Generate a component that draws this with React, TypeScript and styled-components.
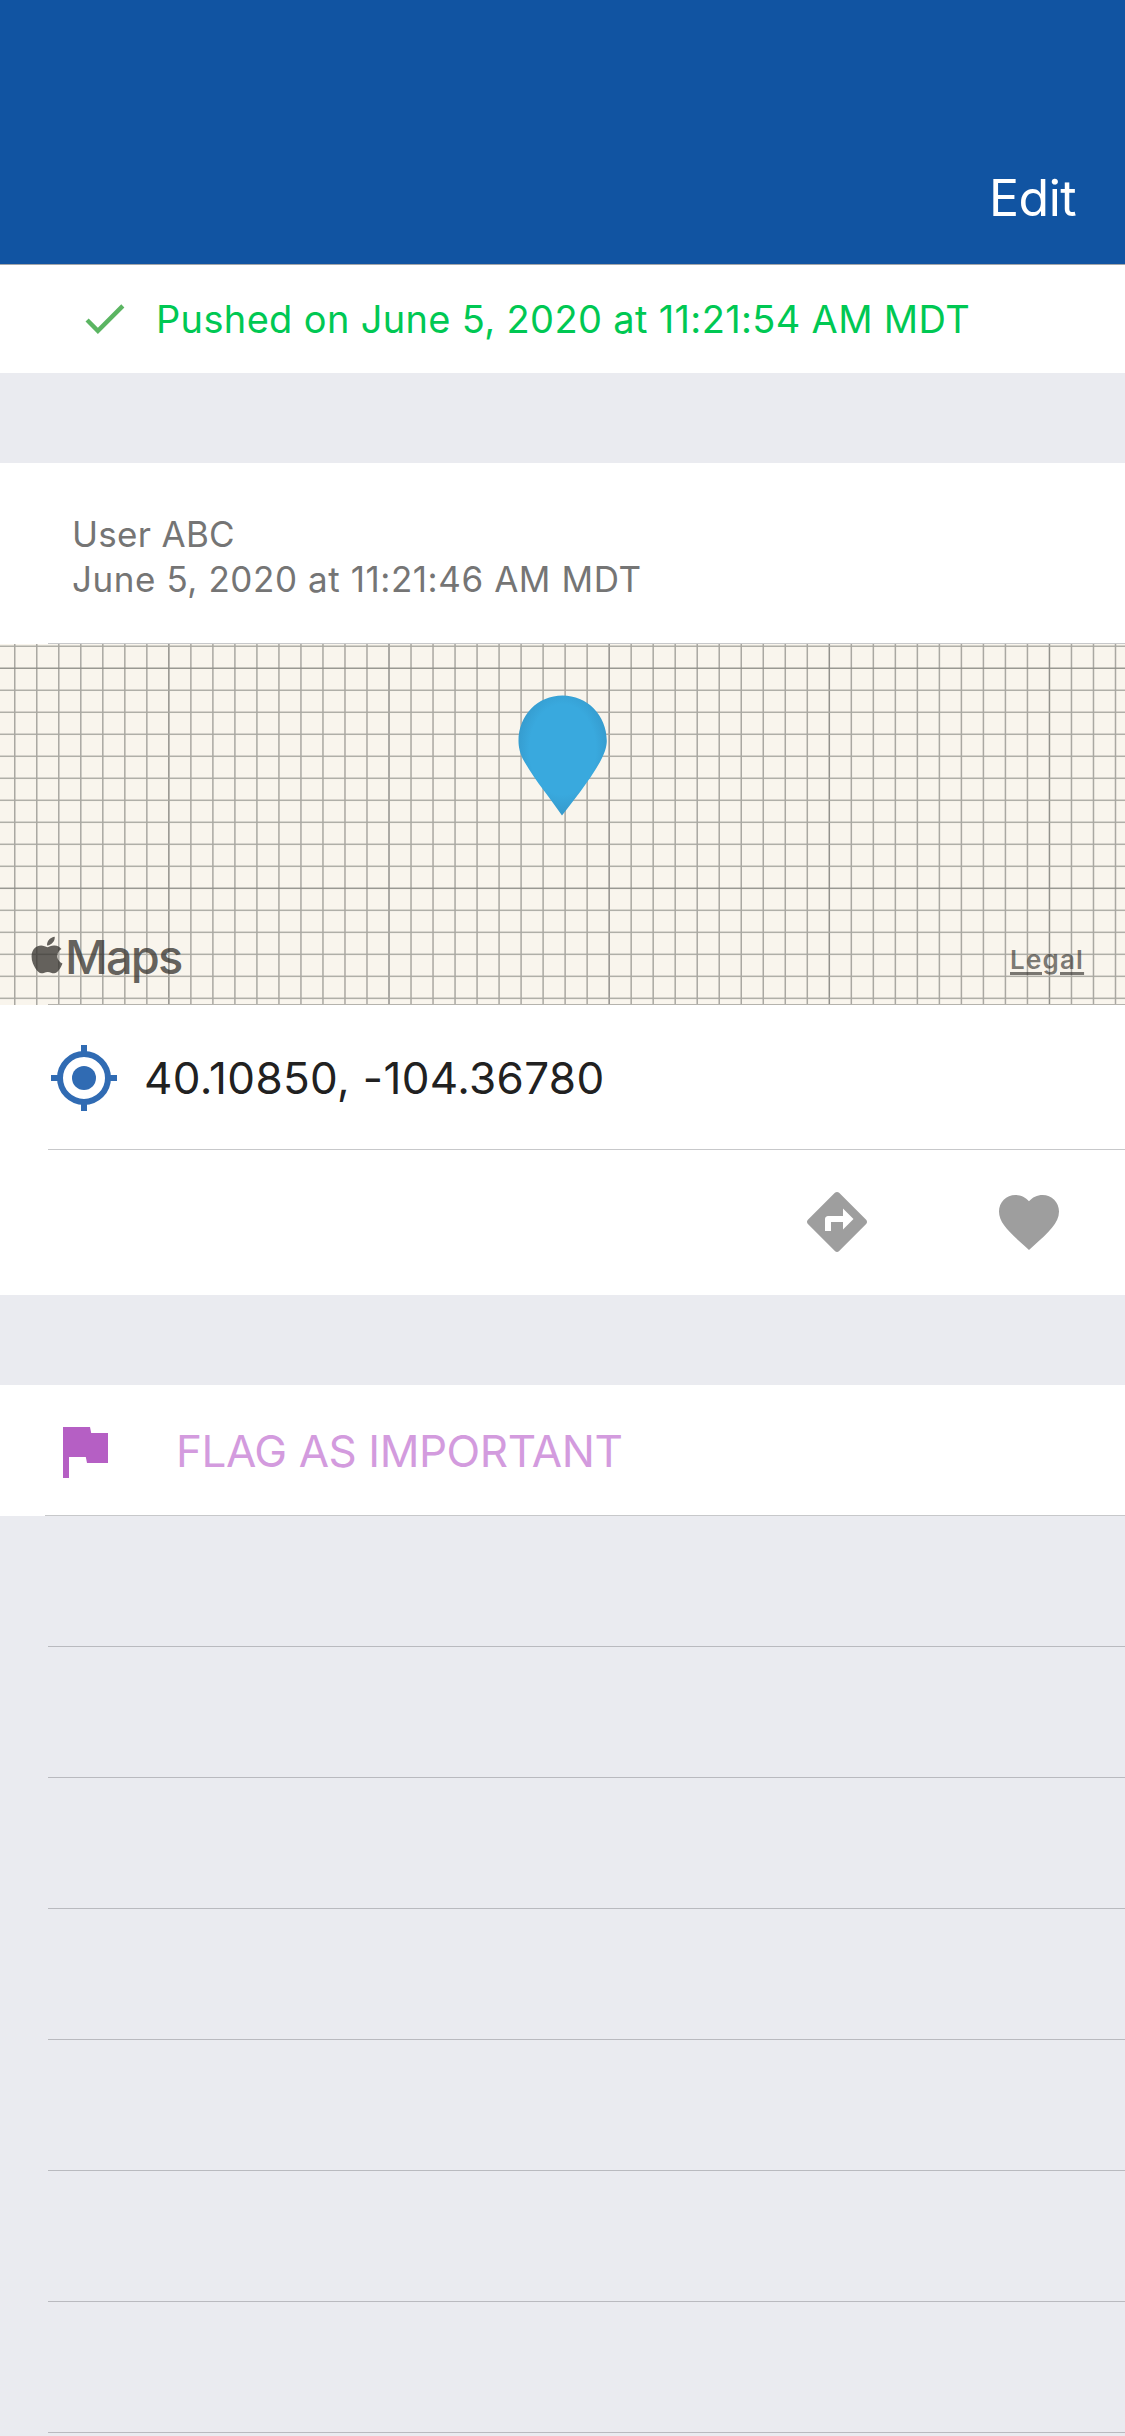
import React from "react";
import styled, { createGlobalStyle } from "styled-components";
import { FaApple } from "react-icons/fa";

const Global = createGlobalStyle`
  * { box-sizing: border-box; }
  body { margin: 0; background: #eaebf0; font-family: Inter, "Liberation Sans", sans-serif; }
`;

const Screen = styled.main`
  display: flex;
  flex-direction: column;
  height: 2436px;
  overflow: hidden;
  background: #eaebf0;
`;

const NavBar = styled.header`
  display: flex;
  justify-content: flex-end;
  align-items: flex-end;
  height: 265px;
  padding: 0 50px 36px 0;
  background: #1154a2;
  border-bottom: 1px solid #a3a6aa;
`;

const Label = styled.span<{ $size: number; $color: string; $width: number; $line?: number; $track?: number }>`
  display: block;
  font-size: ${(p) => p.$size}px;
  line-height: ${(p) => p.$line ?? 60}px;
  letter-spacing: ${(p) => p.$track ?? 0}px;
  color: ${(p) => p.$color};
  width: ${(p) => p.$width}px;
  white-space: nowrap;
`;

const Section = styled.section`
  background: #fff;
`;

const Gap = styled.div`
  height: 90px;
`;

const Row = styled.div<{ $height: number; $inset?: number; $left?: number }>`
  display: flex;
  align-items: center;
  height: ${(p) => p.$height}px;
  padding-top: 1px;
  padding-left: ${(p) => p.$left ?? 0}px;
  background: linear-gradient(#c7c8ca, #c7c8ca) ${(p) => p.$inset ?? 2000}px 100% / 100% 1px no-repeat;
`;

const Status = styled(Row)`
  padding-top: 0;
  padding-bottom: 1px;
`;

const Info = styled(Row)`
  flex-direction: column;
  align-items: flex-start;
  justify-content: center;
  padding-top: 7px;
`;

const MapView = styled.div`
  position: relative;
  height: 361px;
  overflow: hidden;
  background: #f9f5ed;
`;

const MapDrawing = styled.svg`
  display: block;
`;

const MapCredit = styled.div`
  position: absolute;
  left: 31px;
  top: 284px;
  display: flex;
  align-items: flex-start;
  gap: 2px;
  color: rgba(52, 50, 46, 0.76);
`;

const AppleMark = styled(FaApple)`
  display: block;
  flex: none;
  width: 32px;
  height: 42px;
  margin-top: 6px;
`;

const Legal = styled.a`
  position: absolute;
  left: 1009px;
  top: 298px;
  padding-left: 1px;
  font-size: 26px;
  font-weight: 600;
  line-height: 36px;
  letter-spacing: 1.2px;
  color: rgba(60, 58, 54, 0.68);
  text-decoration: underline;
  text-decoration-thickness: 3px;
  text-underline-offset: 3px;
`;

const MapsWord = styled.span`
  font-size: 47px;
  font-weight: 500;
  line-height: 58px;
  letter-spacing: -1.9px;
`;

const Actions = styled(Row)`
  justify-content: flex-end;
  gap: 120px;
  padding: 0 60px 1px 0;
`;

const Icon = styled.svg<{ $gap?: number }>`
  display: block;
  flex: none;
  margin-right: ${(p) => p.$gap ?? 0}px;
`;

const EmptyRow = styled.div`
  height: 131px;
  flex: none;
  margin-left: 48px;
  border-bottom: 1px solid #b9babf;
`;

const range = (count: number) => Array.from({ length: count }, (_, i) => i);

function Grid() {
  return (
    <g>
      {range(51).map((i) => (
        <rect key={i} x={14 + i * 22.015} width="1.5" height="361" fill={i % 10 === 7 ? "#92918c" : "#aaa8a2"} />
      ))}
      {range(17).map((i) => (
        <rect key={i} y={1.5 + i * 22.005} width="1125" height="1.5" fill={i % 10 === 1 ? "#908f8a" : "#a9a8a2"} opacity="0.92" />
      ))}
    </g>
  );
}

export default function App() {
  return (
    <>
      <Global />
      <Screen>
        <NavBar>
          <Label $size={50} $color="#fff" $width={86} $track={-0.5}>Edit</Label>
        </NavBar>
        <Section>
          <Status $height={108} $left={78}>
            <Icon $gap={25} width="53" height="53" viewBox="0 0 24 24" fill="#5bb562">
              <path d="M9 16.170 4.830 12l-1.420 1.410L9 19 21 7l-1.410-1.410z" />
            </Icon>
            <Label $size={38} $line={58} $color="#00c853" $width={820} $track={0.34}>Pushed on June 5, 2020 at 11:21:54 AM MDT</Label>
          </Status>
        </Section>
        <Gap />
        <Section>
          <Info $height={181} $left={72} $inset={48}>
            <Label $size={35} $line={45} $color="#757575" $width={170} $track={0.3}>User ABC</Label>
            <Label $size={35} $line={45} $color="#757575" $width={580} $track={0.57}>June 5, 2020 at 11:21:46 AM MDT</Label>
          </Info>
          <MapView>
            <MapDrawing width="1125" height="362" viewBox="0 0 1125 362">
              <defs>
                <radialGradient id="pin" cx="50%" cy="45%" r="58%">
                  <stop offset="0.65" stopColor="#39a9de" />
                  <stop offset="1" stopColor="#3496c8" />
                </radialGradient>
              </defs>
              <Grid />
              <rect x="48" y="360" width="1077" height="1" fill="#b5b3ad" />
              <path d="M562 171.500C551 155 536 138 524 117C520 110 518.500 103 518.500 97C518.500 71 538 51.500 562.500 51.500C587 51.500 606.800 71 606.800 97C606.800 103 604 111 600 118C588 139 573 157 562 171.500Z" fill="url(#pin)" />
            </MapDrawing>
            <MapCredit>
              <AppleMark />
              <MapsWord>Maps</MapsWord>
            </MapCredit>
            <Legal>Legal</Legal>
          </MapView>
          <Row $height={145} $left={48} $inset={48}>
            <Icon $gap={24} width="72" height="72" viewBox="0 0 24 24">
              <circle cx="12" cy="12" r="8" fill="none" stroke="#306bb3" strokeWidth="2" />
              <circle cx="12" cy="12" r="4" fill="#306bb3" />
              <path d="M11 1h2v3h-2zM11 20h2v3h-2zM1 11h3v2H1zM20 11h3v2h-3z" fill="#306bb3" />
            </Icon>
            <Label $size={44} $color="#212121" $width={470} $track={0.36}>40.10850, -104.36780</Label>
          </Row>
          <Actions $height={145}>
            <Icon width="72" height="72" viewBox="0 0 24 24" fill="#9e9e9e">
              <path d="M21.710 11.290l-9-9c-.39-.39-1.020-.39-1.410 0l-9 9c-.39.390-.39 1.020 0 1.410l9 9c.39.390 1.020.390 1.410 0l9-9c.39-.38.390-1.010 0-1.410zM14 14.500V12h-4v3H8v-4c0-.55.450-1 1-1h5V7.500l3.500 3.500-3.500 3.500z" />
            </Icon>
            <Icon width="72" height="72" viewBox="0 0 24 24" fill="#9e9e9e">
              <path d="M12 21.350l-1.450-1.320C5.400 15.360 2 12.280 2 8.500 2 5.420 4.420 3 7.500 3c1.740 0 3.410.810 4.500 2.090C13.090 3.810 14.760 3 16.500 3 19.580 3 22 5.420 22 8.500c0 3.780-3.400 6.860-8.550 11.540L12 21.350z" />
            </Icon>
          </Actions>
        </Section>
        <Gap />
        <Section>
          <Row $height={131} $left={48} $inset={45}>
            <Icon $gap={56} width="72" height="72" viewBox="0 0 24 24" fill="#b55fc4">
              <path d="M14.400 6L14 4H5v17h2v-7h5.600l.4 2h7V6z" />
            </Icon>
            <Label $size={44} $color="#d39bde" $width={450} $track={-0.45}>FLAG AS IMPORTANT</Label>
          </Row>
        </Section>
        {range(7).map((i) => (
          <EmptyRow key={i} />
        ))}
      </Screen>
    </>
  );
}
